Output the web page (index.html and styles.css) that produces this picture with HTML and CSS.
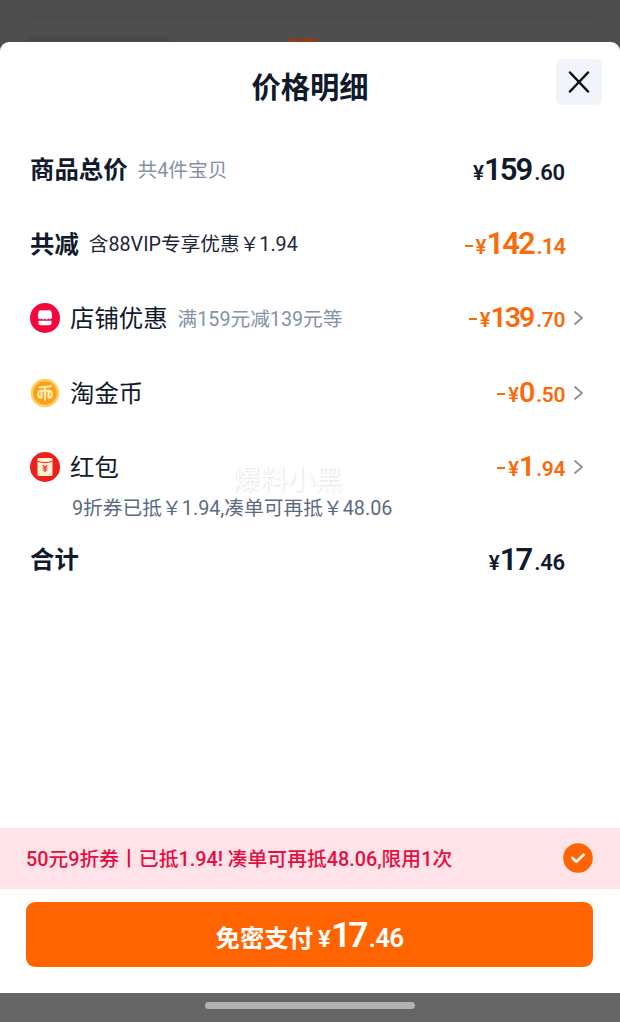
FILE: index.html
```
<!DOCTYPE html>
<html lang="zh-CN">
<head>
  <meta charset="UTF-8">
  <meta name="viewport" content="width=device-width, initial-scale=1.0">
  <title>价格明细</title>
  <link rel="stylesheet" href="styles.css">
</head>
<body>
  <div class="backdrop">
    <div class="backdrop-line"></div>
    <div class="backdrop-chip"></div>
    <div class="backdrop-mark"></div>
  </div>

  <div class="sheet">
    <header class="sheet-header">
      <h2>价格明细</h2>
      <button class="close" aria-label="关闭">
        <svg width="22" height="22" viewBox="0 0 22 22"><path d="M2 1.5 20 20.5M20 1.5 2 20.5"/></svg>
      </button>
    </header>

    <main class="list">
      <div class="row">
        <div class="label strong">商品总价</div>
        <div class="hint">共4件宝贝</div>
        <div class="price"><span class="yen">¥</span><span class="int">159</span><span class="dec">.60</span></div>
      </div>
      <div class="row">
        <div class="label strong">共减</div>
        <div class="hint dark">含88VIP专享优惠￥1.94</div>
        <div class="price minus"><i class="dash"></i><span class="yen">¥</span><span class="int">142</span><span class="dec tight">.14</span></div>
      </div>
      <div class="row">
        <svg class="icon" viewBox="0 0 30 30">
          <circle cx="15" cy="15" r="15" fill="#f5063b"/>
          <path d="M10.500 7.300h9q1.700 0 2 1.700l.7 4.600c0 2.600-2.800 3.200-3.800 1.800-.9 1.500-2.700 1.500-3.400 0-.7 1.500-2.500 1.500-3.400 0-1 1.400-3.800.8-3.800-1.800L8.500 9q.3-1.700 2-1.700z" fill="#fff"/>
          <path d="M8.500 17.800h13v2.500q0 2-2 2h-9q-2 0-2-2z" fill="#fff"/>
        </svg>
        <div class="label">店铺优惠</div>
        <div class="hint">满159元减139元等</div>
        <div class="price minus small"><i class="dash"></i><span class="yen">¥</span><span class="int">139</span><span class="dec">.70</span></div>
        <svg class="arrow" viewBox="0 0 9 14"><path d="M1 1l7 6-7 6"/></svg>
      </div>
      <div class="row">
        <svg class="icon" viewBox="0 0 30 30">
          <circle cx="15" cy="15" r="14.300" fill="#ffcf5c"/>
          <circle cx="15" cy="15" r="11.800" fill="#fb9f1e"/>
          <path d="M9.300 9.200q6 .2 11.600-1.200M15 9.500V22M11 19.800c-3.700 0-3.900-7 .2-7h7.600c4.100 0 3.900 7 .2 7M11.500 13v6.500M18.500 13v6.500" fill="none" stroke="#ffefae" stroke-width="2.100" stroke-linecap="round"/>
        </svg>
        <div class="label">淘金币</div>
        <div class="price minus small"><i class="dash"></i><span class="yen">¥</span><span class="int">0</span><span class="dec">.50</span></div>
        <svg class="arrow" viewBox="0 0 9 14"><path d="M1 1l7 6-7 6"/></svg>
      </div>
      <div class="row packet">
        <svg class="icon" viewBox="0 0 30 30">
          <circle cx="15" cy="15" r="15" fill="#ee201b"/>
          <path d="M8.500 6h13q1 0 1 1v15.500q0 1.500-1.500 1.500H9q-1.500 0-1.500-1.500V7q0-1 1-1z" fill="#fff0d2"/>
          <path d="M7.500 9.300q7.500 2.700 15 0" fill="none" stroke="#e8433a" stroke-width="1.100"/>
          <path d="M12.800 13l2.200 2.700 2.200-2.700M12.600 16h4.800M12.600 18h4.800M15 15.700v4.300" fill="none" stroke="#e72c20" stroke-width="1.100"/>
        </svg>
        <div class="label">红包</div>
        <div class="price minus small"><i class="dash"></i><span class="yen">¥</span><span class="int">1</span><span class="dec">.94</span></div>
        <svg class="arrow" viewBox="0 0 9 14"><path d="M1 1l7 6-7 6"/></svg>
      </div>
      <p class="note">9折券已抵￥1.94,凑单可再抵￥48.06</p>
      <div class="row total">
        <div class="label strong">合计</div>
        <div class="price"><span class="yen">¥</span><span class="int">17</span><span class="dec">.46</span></div>
      </div>
      <div class="watermark">爆料小黑</div>
    </main>

    <div class="coupon">
      <span>50元9折券丨已抵1.94! 凑单可再抵48.06,限用1次</span>
      <svg class="check" viewBox="0 0 30 30">
        <circle cx="15" cy="15" r="14.800" fill="#ff6400"/>
        <path d="M9.300 14.900l4 3.800 7.300-7" fill="none" stroke="#fff" stroke-width="2.600" stroke-linecap="round" stroke-linejoin="round"/>
      </svg>
    </div>

    <button class="pay">
      <span class="pay-text">免密支付</span>
      <span class="price"><span class="yen">¥</span><span class="int">17</span><span class="dec">.46</span></span>
    </button>
  </div>

  <footer class="navbar"><div class="handle"></div></footer>
</body>
</html>
```
FILE: styles.css
```
* {
  box-sizing: border-box;
}
body {
  margin: 0;
  height: 1022px;
  display: flex;
  flex-direction: column;
  background: #4e4e4e;
  color: #111a2c;
  font-family: Roboto, "Noto Sans CJK SC", sans-serif;
  overflow: hidden;
}
h2, p {
  margin: 0;
}
button {
  border: none;
  padding: 0;
  font-family: inherit;
}

/* dimmed page behind the sheet */
.backdrop {
  height: 42px;
  flex: none;
  position: relative;
}
.backdrop-line {
  position: absolute;
  top: 17px;
  left: 27px;
  right: 27px;
  height: 1px;
  background: #494949;
}
.backdrop-chip {
  position: absolute;
  top: 36px;
  left: 27px;
  width: 143px;
  height: 6px;
  border-radius: 6px 6px 0 0;
  background: #494949;
}
.backdrop-mark {
  position: absolute;
  top: 39px;
  left: 289px;
  width: 29px;
  height: 3px;
  background: linear-gradient(90deg, #9c3a0c 7px, #4e4e4e 7px 10px, #9c3a0c 10px);
}

.sheet {
  height: 951px;
  flex: none;
  display: flex;
  flex-direction: column;
  background: #fff;
  border-radius: 9px 9px 0 0;
}
.sheet-header {
  height: 90px;
  position: relative;
  text-align: center;
}
.sheet-header h2 {
  font-size: 29.300px;
  line-height: 93px;
  font-weight: 700;
}
.close {
  position: absolute;
  top: 17px;
  right: 18px;
  width: 46px;
  height: 46px;
  display: flex;
  align-items: center;
  justify-content: center;
  border-radius: 6px;
  background: #f1f4f8;
}
.close path {
  fill: none;
  stroke: #0b0d12;
  stroke-width: 2.500;
  stroke-linecap: round;
}

.list {
  flex: 1;
  position: relative;
}
.row {
  height: 74.500px;
  padding: 0 55px 0 30px;
  display: flex;
  align-items: center;
}
.row.packet {
  height: 60px;
  padding-top: 14px;
}
.row.total {
  height: 70px;
}
.icon {
  width: 30px;
  height: 30px;
  margin-right: 10px;
}
.label {
  padding-top: 2px;
  font-size: 24.400px;
  line-height: 36px;
}
.label.strong {
  font-weight: 700;
}
.hint {
  margin-left: 10px;
  padding-bottom: 2px;
  font-size: 19.700px;
  color: #8592a6;
}
.hint.dark {
  color: #1d2638;
}
.note {
  padding-left: 72px;
  font-size: 19.750px;
  line-height: 37px;
  height: 34px;
  color: #5c6b82;
}
.arrow {
  width: 9px;
  height: 14px;
  margin: 0 -18px 0 9px;
}
.arrow path {
  fill: none;
  stroke: #8c8e94;
  stroke-width: 1.700;
  stroke-linecap: round;
  stroke-linejoin: round;
}

.price {
  margin-left: auto;
  padding-top: 4px;
  display: flex;
  align-items: baseline;
  font-weight: 600;
  line-height: 36px;
}
.price .yen {
  font-size: 20.500px;
}
.price .int {
  font-size: 31px;
  letter-spacing: -2px;
}
.price .dec {
  margin-left: 3px;
  font-size: 22px;
  letter-spacing: -0.200px;
}
.price .dec.tight {
  letter-spacing: -1px;
}
.price.small {
  padding-top: 2px;
}
.price.small .yen {
  font-size: 20px;
}
.price.small .int {
  font-size: 28.500px;
}
.price.small .dec {
  font-size: 21px;
  letter-spacing: -0.400px;
}
.minus {
  color: #f96a0b;
}
.dash {
  width: 8px;
  height: 2px;
  margin-right: 3px;
  background: currentColor;
  transform: translateY(-7px);
}

.watermark {
  position: absolute;
  top: 328px;
  left: 233px;
  font-size: 27.300px;
  line-height: 40px;
  color: #fff;
  text-shadow: 1px 1px 2px rgba(0, 0, 0, 0.13);
}

.coupon {
  height: 61px;
  padding: 0 27px 1px 26px;
  display: flex;
  align-items: center;
  justify-content: space-between;
  background: #ffe3e8;
  color: #e30f42;
  font-size: 19.800px;
  font-weight: 500;
}
.coupon span {
  padding-bottom: 2px;
}
.check {
  width: 30px;
  height: 30px;
}

.pay {
  height: 65px;
  margin: 13px 27px 26px 26px;
  display: flex;
  align-items: center;
  justify-content: center;
  border-radius: 9px;
  background: #ff6400;
  color: #fff;
}
.pay-text {
  padding-top: 3px;
  font-size: 24.400px;
  font-weight: 700;
}
.pay .price {
  margin-left: 5px;
  padding-top: 4px;
}
.pay .yen {
  font-size: 24px;
}
.pay .int {
  font-size: 35.500px;
  letter-spacing: -3px;
}
.pay .dec {
  font-size: 26px;
  letter-spacing: -0.700px;
}

.navbar {
  flex: 1;
  display: flex;
  justify-content: center;
  padding-top: 9px;
  background: #656565;
}
.handle {
  width: 210px;
  height: 7px;
  border-radius: 4px;
  background: #b2b2b2;
}
```
